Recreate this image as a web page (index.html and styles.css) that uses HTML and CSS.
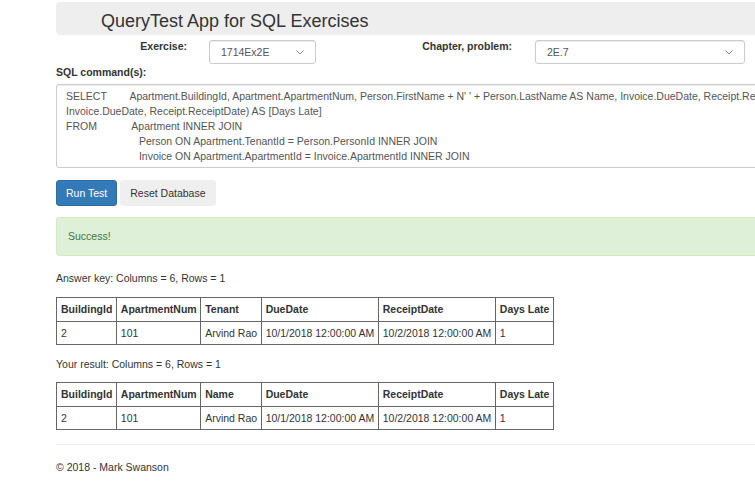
FILE: index.html
```html
<!DOCTYPE html>
<html lang="en">
<head>
<meta charset="utf-8">
<title>QueryTest App for SQL Exercises</title>
<link rel="stylesheet" href="styles.css">
</head>
<body>
<div class="container">
  <div class="jumbotron">
    <h1 class="title">QueryTest App for SQL Exercises</h1>
  </div>

  <div class="selectors">
    <label class="control-label label-exercise">Exercise:</label>
    <div class="select select-exercise">
      <span>1714Ex2E</span>
      <svg class="chevron" width="8" height="5" viewBox="0 0 8 5"><polyline points="0.5,0.5 4,4 7.5,0.5" fill="none" stroke="#8a8a8a" stroke-width="1"/></svg>
    </div>
    <label class="control-label label-chapter">Chapter, problem:</label>
    <div class="select select-chapter">
      <span>2E.7</span>
      <svg class="chevron" width="8" height="5" viewBox="0 0 8 5"><polyline points="0.5,0.5 4,4 7.5,0.5" fill="none" stroke="#8a8a8a" stroke-width="1"/></svg>
    </div>
  </div>

  <div class="sql-label">SQL command(s):</div>
  <textarea class="sql" readonly>SELECT        Apartment.BuildingId, Apartment.ApartmentNum, Person.FirstName + N' ' + Person.LastName AS Name, Invoice.DueDate, Receipt.ReceiptDate, DATEDIFF(day, Invoice.DueDate, Receipt.ReceiptDate) AS [Days Late]
FROM            Apartment INNER JOIN
                         Person ON Apartment.TenantId = Person.PersonId INNER JOIN
                         Invoice ON Apartment.ApartmentId = Invoice.ApartmentId INNER JOIN
                         Receipt ON Invoice.InvoiceId = Receipt.InvoiceId</textarea>

  <div class="buttons">
    <button class="btn btn-primary">Run Test</button>
    <button class="btn btn-default">Reset Database</button>
  </div>

  <div class="alert">Success!</div>

  <p class="count count-first">Answer key: Columns = 6, Rows = 1</p>
  <table class="result result-first">
    <thead>
      <tr><th>BuildingId</th><th>ApartmentNum</th><th>Tenant</th><th>DueDate</th><th>ReceiptDate</th><th>Days Late</th></tr>
    </thead>
    <tbody>
      <tr><td>2</td><td>101</td><td>Arvind Rao</td><td>10/1/2018 12:00:00 AM</td><td>10/2/2018 12:00:00 AM</td><td>1</td></tr>
    </tbody>
  </table>

  <p class="count count-second">Your result: Columns = 6, Rows = 1</p>
  <table class="result result-second">
    <thead>
      <tr><th>BuildingId</th><th>ApartmentNum</th><th>Name</th><th>DueDate</th><th>ReceiptDate</th><th>Days Late</th></tr>
    </thead>
    <tbody>
      <tr><td>2</td><td>101</td><td>Arvind Rao</td><td>10/1/2018 12:00:00 AM</td><td>10/2/2018 12:00:00 AM</td><td>1</td></tr>
    </tbody>
  </table>

  <hr class="rule">
  <footer class="footer">
    <p class="copyright">&copy; 2018 - Mark Swanson</p>
  </footer>
</div>
</body>
</html>
```

FILE: styles.css
```css
html {
  overflow: hidden;
}

body {
  margin: 0;
  font-family: "Liberation Sans", Arial, sans-serif;
  font-size: 10.5px;
  line-height: 15px;
  color: #333;
  background: #fff;
}

.container {
  margin-left: 56px;
  width: 870px;
}

.jumbotron {
  margin-top: 2px;
  background: #eee;
  border-radius: 4.5px;
  padding: 9px 45px 4px;
}

.title {
  margin: 0;
  font-size: 18px;
  line-height: 20px;
  font-weight: normal;
  color: #333;
}

.selectors {
  display: flex;
  align-items: flex-start;
  margin-top: 5px;
}

.control-label {
  font-weight: bold;
  text-align: right;
  margin-top: -1px;
}

.label-exercise {
  width: 131px;
  margin-right: 22px;
}

.label-chapter {
  width: 196px;
  margin-right: 23px;
}

.select {
  box-sizing: border-box;
  height: 24px;
  border: 1px solid #ccc;
  border-radius: 3px;
  background: #fff;
  color: #555;
  display: flex;
  align-items: center;
  justify-content: space-between;
  padding: 0 11px;
  box-shadow: inset 0 1px 1px rgba(0, 0, 0, 0.075);
}

.select-exercise {
  width: 107px;
}

.select-chapter {
  width: 210px;
}

.chevron {
  display: block;
}

.sql-label {
  margin-top: 1px;
  font-weight: bold;
}

.sql {
  display: block;
  box-sizing: border-box;
  width: 100%;
  height: 84px;
  margin: 4px 0 0;
  padding: 3.5px 9px 4.5px;
  border: 1px solid #ccc;
  border-radius: 3px;
  font-family: inherit;
  font-size: 10.5px;
  line-height: 15px;
  color: #555;
  background: #fff;
  overflow: hidden;
  resize: none;
  white-space: pre-wrap;
  box-shadow: inset 0 1px 1px rgba(0, 0, 0, 0.075);
  outline: none;
}

.buttons {
  display: flex;
  gap: 3px;
  margin-top: 12px;
}

.btn {
  box-sizing: border-box;
  height: 26px;
  padding: 4.5px 9px;
  font-family: inherit;
  font-size: 10.5px;
  line-height: 15px;
  border: 1px solid transparent;
  border-radius: 3px;
}

.btn-primary {
  background: #337ab7;
  border-color: #2e6da4;
  color: #fff;
}

.btn-default {
  background: #efefef;
  border-color: #efefef;
  color: #333;
}

.alert {
  margin-top: 11px;
  padding: 11px;
  border: 1px solid #d6e9c6;
  border-radius: 3px;
  background: #dff0d8;
  color: #3c763d;
}

.count {
  margin: 0;
}

.count-first {
  margin-top: 15px;
}

.count-second {
  margin-top: 11.5px;
}

.result {
  border-collapse: collapse;
}

.result-first {
  margin-top: 11px;
}

.result-second {
  margin-top: 10.5px;
}

.result th,
.result td {
  border: 1px solid #666;
  padding: 4px 3.5px 3.5px 4px;
  text-align: left;
  white-space: nowrap;
}

.result th {
  font-weight: bold;
}

.rule {
  margin: 14px 0 0;
  border: 0;
  border-top: 1px solid #eee;
}

.copyright {
  margin: 15px 0 0;
}
```
